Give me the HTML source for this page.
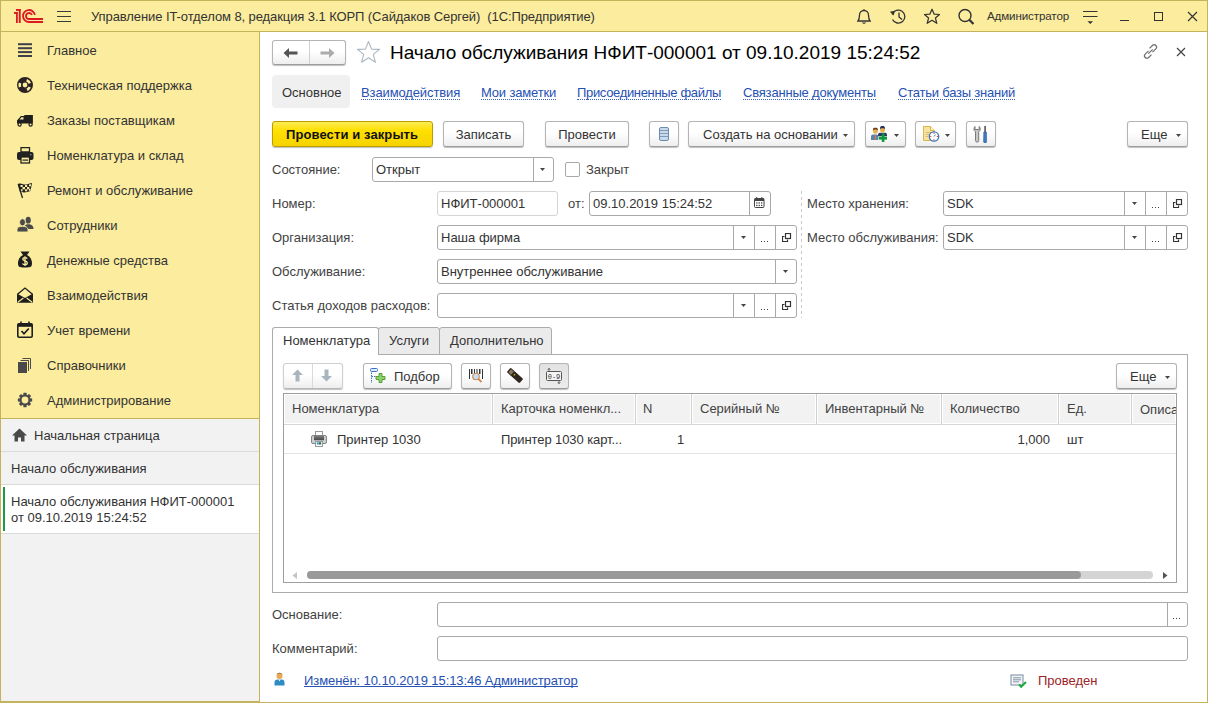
<!DOCTYPE html>
<html><head><meta charset="utf-8">
<style>
*{box-sizing:border-box;margin:0;padding:0}
html,body{width:1208px;height:703px;overflow:hidden;background:#fff;font-family:"Liberation Sans",sans-serif;font-size:13px;color:#333}
div,span,svg{position:absolute}
.t{white-space:nowrap;line-height:16px}
.bd{background:#C4B25C}
.si{left:47px;color:#333;white-space:nowrap;line-height:16px}
.lbl{color:#424242;white-space:nowrap;line-height:16px}
.inp{border:1px solid #A9A9A9;border-radius:3px;background:#fff;height:25px}
.inp .v{left:3px;top:4px;color:#333;white-space:nowrap;line-height:16px}
.dv{top:0;width:1px;height:23px;background:#A9A9A9}
.btn{border:1px solid #B4B4B4;border-bottom-color:#9C9C9C;border-radius:3px;background:linear-gradient(#FFFFFF 45%,#EEEEEE);box-shadow:0 1px 1px rgba(0,0,0,.25);height:26px}
.btn .v{top:5px;width:100%;left:0;text-align:center;color:#333;white-space:nowrap;line-height:16px}
.lnk{color:#2550B4;white-space:nowrap;line-height:16px;height:15px;border-bottom:1px dotted #3A62BE}
</style></head><body>
<!-- frame -->
<div style="left:0;top:0;width:1208px;height:31px;background:#FBEC9E"></div>
<div class="bd" style="left:0;top:0;width:1208px;height:1px"></div>
<div class="bd" style="left:0;top:31px;width:1208px;height:1px"></div>
<div style="left:1px;top:32px;width:258px;height:387px;background:#FBEC9E"></div>
<div class="bd" style="left:1px;top:418px;width:258px;height:1px"></div>
<div style="left:1px;top:419px;width:258px;height:283px;background:#F2F2F2"></div>
<div class="bd" style="left:259px;top:31px;width:1px;height:672px"></div>
<div class="bd" style="left:0;top:0;width:1px;height:703px"></div>
<div class="bd" style="left:1207px;top:0;width:1px;height:703px"></div>
<div class="bd" style="left:0;top:702px;width:1208px;height:1px"></div>
<div class="bd" style="left:0;top:701px;width:259px;height:1px"></div>

<!-- title bar -->
<svg style="left:10px;top:5px" width="36" height="20" viewBox="0 0 36 20"><g fill="#DA1A22"><rect x="4" y="7" width="3.6" height="1.9"/><rect x="6" y="7" width="1.8" height="11"/><rect x="6" y="4" width="4.7" height="1.9"/><rect x="8.8" y="4" width="1.9" height="14"/></g><g fill="none" stroke="#DA1A22" stroke-width="1.8"><path d="M24.9 9.96A6 6 0 1 0 19 17H33"/><path d="M21.85 10.07A3 3 0 1 0 19 14H33"/></g></svg>
<svg style="left:57px;top:10px" width="15" height="13" viewBox="0 0 15 13"><g stroke="#3A3A3A" stroke-width="1.2"><path d="M0 1.5H14M0 6.5H14M0 11.5H14"/></g></svg>
<div class="t" style="left:91px;top:9px;color:#333;letter-spacing:-0.09px">Управление IT-отделом 8, редакция 3.1 КОРП (Сайдаков Сергей)&nbsp; (1С:Предприятие)</div>

<svg style="left:855px;top:8px" width="18" height="17" viewBox="0 0 18 17"><g fill="none" stroke="#333" stroke-width="1.3"><path d="M3 13 C4.5 11 4.5 9 4.5 7 A4.5 4.5 0 0 1 13.5 7 C13.5 9 13.5 11 15 13 Z"/><path d="M9 1.2V2.5"/></g><path d="M6.5 14.6H11.5L9 16Z" fill="#333"/></svg>
<svg style="left:889px;top:8px" width="19" height="17" viewBox="0 0 19 17"><g fill="none" stroke="#333" stroke-width="1.3"><path d="M3.2 6.5 A6.5 6.5 0 1 1 3.5 11.5"/><path d="M10 4.5V9L13 11.5"/></g><path d="M0.8 3.8L4.6 7.6L6 2.8Z" fill="#333"/></svg>
<svg style="left:923px;top:8px" width="18" height="17" viewBox="0 0 18 17"><path d="M9 1.2L11.2 6.2L16.5 6.5L12.4 9.9L13.8 15.3L9 12.3L4.2 15.3L5.6 9.9L1.5 6.5L6.8 6.2Z" fill="none" stroke="#333" stroke-width="1.25" stroke-linejoin="round"/></svg>
<svg style="left:957px;top:8px" width="19" height="17" viewBox="0 0 19 17"><g fill="none" stroke="#333"><circle cx="8" cy="7.5" r="6" stroke-width="1.4"/><path d="M12.3 11.8L16.5 16" stroke-width="2.2"/></g></svg>
<div class="t" style="left:987px;top:8px;font-size:11.6px;letter-spacing:-0.12px;color:#333">Администратор</div>
<svg style="left:1082px;top:9px" width="17" height="16" viewBox="0 0 17 16"><g stroke="#333" stroke-width="1.2"><path d="M1 2.5H15.5M1 7.5H15.5"/></g><path d="M5.5 12.2H11L8.25 15Z" fill="#333"/></svg>
<div style="left:1120px;top:20px;width:9px;height:1.3px;background:#333"></div>
<div style="left:1154px;top:12px;width:9px;height:9px;border:1.3px solid #333"></div>
<svg style="left:1187px;top:11px" width="11" height="11" viewBox="0 0 11 11"><path d="M1 1L10 10M10 1L1 10" stroke="#333" stroke-width="1.2"/></svg>

<!-- sidebar -->
<svg style="left:17px;top:42px" width="16" height="16" viewBox="0 0 16 16"><g fill="#3D404B"><rect x="1" y="1.2" width="14" height="2"/><rect x="1" y="5.2" width="14" height="2"/><rect x="1" y="9.1" width="14" height="2"/><rect x="1" y="13" width="14" height="2"/></g></svg>
<svg style="left:17px;top:77px" width="16" height="16" viewBox="0 0 16 16"><circle cx="8" cy="8" r="5.2" fill="none" stroke="#2A2224" stroke-width="5.6"/><g stroke="#FBEC9E" stroke-width="2.6" fill="none"><path d="M9.6 3.2A5 5 0 0 1 12.8 6.4"/><path d="M12.7 10A5 5 0 0 1 10 12.7"/><path d="M3.1 10A5 5 0 0 1 3.1 6"/></g></svg>
<svg style="left:17px;top:113px" width="16" height="14" viewBox="0 0 16 14"><path d="M0 10.5V7.6L3.9 3.1H7.3V2.1H15.9V10.5Z" fill="#1E1E1E"/><path d="M2.6 6.6L4.4 4.2H6.5V6.6Z" fill="#FBEC9E"/><circle cx="2.6" cy="11.5" r="1.6" fill="#FBEC9E" stroke="#1E1E1E" stroke-width="1.2"/><circle cx="13.6" cy="11.5" r="1.6" fill="#FBEC9E" stroke="#1E1E1E" stroke-width="1.2"/></svg>
<svg style="left:17px;top:147px" width="17" height="17" viewBox="0 0 17 17"><path d="M4 0.5H12.5V5H4Z" fill="none" stroke="#222" stroke-width="1.3"/><rect x="0" y="5" width="16.5" height="8" rx="2" fill="#222"/><rect x="4" y="10" width="8.5" height="6" fill="#FBEC9E" stroke="#222" stroke-width="1.3"/><rect x="5.5" y="12.5" width="5.5" height="1.2" fill="#222"/><rect x="13" y="7" width="1.5" height="1.3" fill="#888"/></svg>
<svg style="left:17px;top:182px" width="16" height="17" viewBox="0 0 16 17"><path d="M1 2C4 0.5 6 3 9 2.5C11 2.2 13 1 15 1L13.5 9C11 9.5 9.5 10.5 7 10.5C5 10.5 4 9.5 3 10Z" fill="#222"/><g fill="#FBEC9E"><rect x="3.5" y="3" width="2.2" height="2"/><rect x="8" y="3" width="2.2" height="2"/><rect x="12" y="2.3" width="2" height="2"/><rect x="5.5" y="5" width="2.5" height="2.3"/><rect x="10" y="5" width="2.3" height="2.3"/><rect x="3.6" y="7.3" width="2" height="2"/><rect x="8" y="7.3" width="2.2" height="2"/><rect x="12" y="6.8" width="1.5" height="2"/></g><path d="M1.2 2L5.5 16" stroke="#222" stroke-width="1.3"/></svg>
<svg style="left:17px;top:216px" width="17" height="17" viewBox="0 0 17 17"><g fill="#4A4A4A"><ellipse cx="11.2" cy="4.2" rx="2.6" ry="3.4"/><path d="M8 9.5C9 8 13.5 8 14.5 9C16 10 16.5 11 16.5 13H11Z"/></g><g fill="#4A4A4A" stroke="#FBEC9E" stroke-width="0.9"><ellipse cx="5.5" cy="6.3" rx="3" ry="3.6"/><path d="M0 16V13.5C0 11.5 2 10.3 5.5 10.3C9 10.3 11 11.5 11 13.5V16Z"/></g></svg>
<svg style="left:17px;top:251px" width="16" height="17" viewBox="0 0 16 17"><path d="M3.5 0.5H12.5L10 4C15 6.5 16 12.5 14.2 15.6C12.5 16.9 3.5 16.9 1.8 15.6C0 12.5 1 6.5 6 4Z" fill="#1E1E1E"/><path d="M10.3 7.6C9.8 6.9 9 6.6 8 6.6C6.6 6.6 5.8 7.3 5.8 8.3C5.8 10.3 10.3 9.6 10.3 11.9C10.3 13 9.3 13.7 8 13.7C6.9 13.7 6 13.3 5.5 12.5M8 5.3V15" fill="none" stroke="#FBEC9E" stroke-width="1.3"/></svg>
<svg style="left:17px;top:286px" width="16" height="17" viewBox="0 0 16 17"><rect x="0" y="7.8" width="16" height="8.9" rx="0.6" fill="#1E1E1E"/><path d="M0.9 8.1L8 2.7L15.1 8.1L8 11.9Z" fill="#FBEC9E"/><path d="M0.5 8.2L8 2.1L15.5 8.2" fill="none" stroke="#1E1E1E" stroke-width="1.3"/><path d="M0.8 16.2L6.4 12M15.2 16.2L9.6 12" stroke="#FBEC9E" stroke-width="1.1"/></svg>
<svg style="left:17px;top:321px" width="16" height="17" viewBox="0 0 16 17"><rect x="0.8" y="2.8" width="14.4" height="13.4" rx="1.2" fill="none" stroke="#1E1E1E" stroke-width="1.6"/><rect x="0.8" y="2.8" width="14.4" height="3" fill="#1E1E1E"/><path d="M4 0.5V3.5M12 0.5V3.5" stroke="#1E1E1E" stroke-width="1.6"/><path d="M4.5 10L7 12.8L11.8 7.5" fill="none" stroke="#1E1E1E" stroke-width="1.7"/></svg>
<svg style="left:18px;top:357px" width="14" height="16" viewBox="0 0 14 16"><g fill="none" stroke="#4A4A4A" stroke-width="1"><path d="M4.5 1.5H12.5V12"/><path d="M2.5 3.5H10.5V14"/></g><rect x="0" y="5" width="9" height="11" fill="#4A4A4A"/></svg>
<svg style="left:17px;top:392px" width="16" height="16" viewBox="0 0 16 16"><path d="M6.55 0.85 L9.45 0.85 L9.87 3.04 L10.19 3.17 L12.03 1.92 L14.08 3.97 L12.83 5.81 L12.96 6.13 L15.15 6.55 L15.15 9.45 L12.96 9.87 L12.83 10.19 L14.08 12.03 L12.03 14.08 L10.19 12.83 L9.87 12.96 L9.45 15.15 L6.55 15.15 L6.13 12.96 L5.81 12.83 L3.97 14.08 L1.92 12.03 L3.17 10.19 L3.04 9.87 L0.85 9.45 L0.85 6.55 L3.04 6.13 L3.17 5.81 L1.92 3.97 L3.97 1.92 L5.81 3.17 L6.13 3.04Z" fill="#4A4A4A"/><circle cx="8" cy="8" r="3.4" fill="#FBEC9E"/></svg>
<div class="si" style="top:43px">Главное</div>
<div class="si" style="top:78px">Техническая поддержка</div>
<div class="si" style="top:113px">Заказы поставщикам</div>
<div class="si" style="top:148px">Номенклатура и склад</div>
<div class="si" style="top:183px">Ремонт и обслуживание</div>
<div class="si" style="top:218px">Сотрудники</div>
<div class="si" style="top:253px">Денежные средства</div>
<div class="si" style="top:288px">Взаимодействия</div>
<div class="si" style="top:323px">Учет времени</div>
<div class="si" style="top:358px">Справочники</div>
<div class="si" style="top:393px">Администрирование</div>

<svg style="left:12px;top:428px" width="16" height="14" viewBox="0 0 16 14"><path d="M7.5 0.5L0 7.5H2.5V13.5H6V9.5H9V13.5H12.5V7.5H15Z" fill="#4A4A4A"/></svg>
<div class="t" style="left:34px;top:428px">Начальная страница</div>
<div style="left:1px;top:451px;width:258px;height:1px;background:#DADADA"></div>
<div class="t" style="left:11px;top:461px">Начало обслуживания</div>
<div style="left:1px;top:484px;width:258px;height:50px;background:#fff;border-top:1px solid #DADADA;border-bottom:1px solid #DADADA"></div>
<div style="left:3px;top:487px;width:2px;height:44px;background:#1E9B47"></div>
<div class="t" style="left:11px;top:494px">Начало обслуживания НФИТ-000001<br>от 09.10.2019 15:24:52</div>

<!-- MAIN -->
<!-- header -->
<div class="btn" style="left:272px;top:40px;width:74px;height:25px"></div>
<div style="left:309px;top:41px;width:1px;height:23px;background:#D0D0D0"></div>
<svg style="left:283px;top:47px" width="16" height="12" viewBox="0 0 16 12"><path d="M0.5 6L6 1V4.5H14.5V7.5H6V11Z" fill="#555"/></svg>
<svg style="left:319px;top:47px" width="16" height="12" viewBox="0 0 16 12"><path d="M15.5 6L10 1V4.5H1.5V7.5H10V11Z" fill="#ABABAB"/></svg>
<svg style="left:356px;top:40px" width="25" height="24" viewBox="0 0 25 24"><path d="M12.5 1.5L15.6 9.1L23.5 9.4L17.3 14.4L19.4 22.2L12.5 17.7L5.6 22.2L7.7 14.4L1.5 9.4L9.4 9.1Z" fill="none" stroke="#ADB6BF" stroke-width="1.1" stroke-linejoin="round"/></svg>
<div class="t" style="left:390px;top:42px;font-size:19px;line-height:22px;color:#000">Начало обслуживания НФИТ-000001 от 09.10.2019 15:24:52</div>
<svg style="left:1142px;top:43px" width="17" height="17" viewBox="0 0 17 17"><g fill="none" stroke="#6E6E6E" stroke-width="1.2"><path d="M6.5 7.8L3.2 11.1A2.4 2.4 0 0 0 6.6 14.5L9.5 11.6"/><path d="M10.5 9.2L13.8 5.9A2.4 2.4 0 0 0 10.4 2.5L7.5 5.4"/><path d="M6.3 10.7L10.7 6.3"/></g></svg>
<svg style="left:1176px;top:47px" width="10" height="10" viewBox="0 0 10 10"><path d="M1 1L9 9M9 1L1 9" stroke="#444" stroke-width="1.2"/></svg>

<!-- tabs links -->
<div style="left:272px;top:75px;width:78px;height:33px;background:#F0F0F0;border-radius:4px"></div>
<div class="t" style="left:282px;top:85px;color:#333">Основное</div>
<div class="lnk" style="left:361px;top:85px;letter-spacing:-0.12px">Взаимодействия</div>
<div class="lnk" style="left:481px;top:85px;letter-spacing:-0.17px">Мои заметки</div>
<div class="lnk" style="left:577px;top:85px;letter-spacing:-0.33px">Присоединенные файлы</div>
<div class="lnk" style="left:743px;top:85px;letter-spacing:-0.19px">Связанные документы</div>
<div class="lnk" style="left:898px;top:85px;letter-spacing:-0.22px">Статьи базы знаний</div>

<!-- toolbar -->
<div style="left:272px;top:121px;width:161px;height:26px;border:1px solid #B89E00;border-radius:3px;background:linear-gradient(#FFEC55,#FFE000 35%,#F6D300);box-shadow:0 1px 1px rgba(0,0,0,.25)"></div>
<div class="t" style="left:286px;top:127px;font-weight:bold;color:#111;letter-spacing:0.1px">Провести и закрыть</div>
<div class="btn" style="left:443px;top:121px;width:81px"><div class="v">Записать</div></div>
<div class="btn" style="left:545px;top:121px;width:84px"><div class="v">Провести</div></div>
<div class="btn" style="left:649px;top:121px;width:30px"></div>
<svg style="left:659px;top:127px" width="10" height="14" viewBox="0 0 10 14"><rect x="0.5" y="0.5" width="9" height="13" rx="1.5" fill="#C9DAEA" stroke="#6A8BAA"/><g stroke="#7E9CB9" stroke-width="1"><path d="M1 3.5H9M1 6.5H9M1 9.5H9"/></g></svg>
<div class="btn" style="left:688px;top:121px;width:167px"><div class="v" style="left:14px;width:auto;text-align:left">Создать на основании</div></div>
<div class="btn" style="left:865px;top:121px;width:41px"></div>
<svg style="left:868px;top:123px" width="24" height="22" viewBox="0 0 24 22">
 <path d="M10 13.5V11.7A2 2 0 0 1 12 9.7H17A2 2 0 0 1 19 11.7V13.5Z" fill="#2B3766"/>
 <ellipse cx="14.5" cy="6.6" rx="2.5" ry="3" fill="#E6B450"/><path d="M12 6.2C11.8 3.5 13 3 14.5 3C16 3 17.2 3.5 17 6.2C16.5 4.8 12.5 4.8 12 6.2Z" fill="#2A2F5A"/>
 <path d="M3 17V13.6A2 2 0 0 1 5 11.6H8.4A2 2 0 0 1 10.4 13.6V17Z" fill="#5D84A6"/><path d="M7 11.8H7.9L8.1 16.8H6.8Z" fill="#E07A55"/>
 <ellipse cx="7.4" cy="7.8" rx="2.5" ry="2.9" fill="#E6B450"/><path d="M4.9 7.5C4.7 5 5.8 4.7 7.4 4.7C9 4.7 10.1 5 9.9 7.5C9.4 6.2 5.4 6.2 4.9 7.5Z" fill="#6A3A12"/>
 <rect x="10.3" y="13.3" width="9.2" height="3.8" fill="#fff" opacity="0.7"/>
 <rect x="13.8" y="10.3" width="2.6" height="8.7" fill="#0E9A3A"/><rect x="10.8" y="13.8" width="8.2" height="2.8" fill="#0E9A3A"/>
</svg>
<div class="btn" style="left:915px;top:121px;width:41px"></div>
<svg style="left:922px;top:126px" width="18" height="16" viewBox="0 0 18 16">
 <path d="M1.5 0.5H8.5L12.5 4.5V14.5H1.5Z" fill="#F6E4A0" stroke="#D9B54A"/><path d="M8.5 0.5V4.5H12.5" fill="#FFF6CC" stroke="#D9B54A"/>
 <g stroke="#D0B060" stroke-width="0.8"><path d="M3.5 6.5H9M3.5 8.5H7M3.5 10.5H6"/></g>
 <circle cx="12" cy="10.5" r="4.7" fill="#fff" stroke="#3F73B8" stroke-width="1.3"/>
 <g fill="#E02020"><rect x="11.5" y="6.8" width="1" height="1"/><rect x="11.5" y="13.3" width="1" height="1"/><rect x="8.3" y="10" width="1" height="1"/><rect x="14.8" y="10" width="1" height="1"/></g>
 <path d="M12 10.5L13.5 8.5" stroke="#3F73B8" stroke-width="0.9"/>
</svg>
<div class="btn" style="left:966px;top:121px;width:30px"></div>
<svg style="left:973px;top:125px" width="16" height="18" viewBox="0 0 16 18">
 <path d="M2 1.5C0.5 3 0.5 5.5 2.5 6.8V15.5A1.6 1.6 0 0 0 5.7 15.5V6.8C7.7 5.5 7.7 3 6.2 1.5V4.5H2Z" fill="#C9C9C9" stroke="#6E6E6E" stroke-width="0.9"/>
 <rect x="11.3" y="1" width="1.6" height="6" fill="#555"/>
 <path d="M10.8 7H13.4L13.6 16.5A1.5 1.5 0 0 1 10.6 16.5Z" fill="#3D7CC4" stroke="#2A5A96" stroke-width="0.6"/>
</svg>
<div class="btn" style="left:1127px;top:121px;width:61px"><div class="v" style="left:13px;width:auto;text-align:left">Еще</div></div>

<!-- fields -->
<div class="lbl" style="left:272px;top:162px">Состояние:</div>
<div class="inp" style="left:372px;top:157px;width:182px"><div class="v">Открыт</div><div class="dv" style="left:160px"></div></div>
<div style="left:565px;top:162px;width:15px;height:15px;border:1px solid #A9A9A9;border-radius:2px;background:#fff"></div>
<div class="lbl" style="left:586px;top:162px">Закрыт</div>

<div class="lbl" style="left:272px;top:196px">Номер:</div>
<div class="inp" style="left:437px;top:191px;width:121px;border-color:#D4D4D4"><div class="v">НФИТ-000001</div></div>
<div class="lbl" style="left:568px;top:196px">от:</div>
<div class="inp" style="left:589px;top:191px;width:182px"><div class="v">09.10.2019 15:24:52</div><div class="dv" style="left:159px"></div></div>
<svg style="left:754px;top:197px" width="11" height="11" viewBox="0 0 11 11"><rect x="0.5" y="1.5" width="9.5" height="9" rx="1" fill="#fff" stroke="#444"/><rect x="0.5" y="1.5" width="9.5" height="2.5" fill="#444"/><g fill="#444"><rect x="2.2" y="5.3" width="1.3" height="1.3"/><rect x="4.6" y="5.3" width="1.3" height="1.3"/><rect x="7" y="5.3" width="1.3" height="1.3"/><rect x="2.2" y="7.8" width="1.3" height="1.3"/><rect x="4.6" y="7.8" width="1.3" height="1.3"/><rect x="7" y="7.8" width="1.3" height="1.3"/></g><path d="M2.7 0V2M7.8 0V2" stroke="#444"/></svg>

<div class="lbl" style="left:272px;top:230px">Организация:</div>
<div class="inp" style="left:437px;top:225px;width:360px"><div class="v">Наша фирма</div><div class="dv" style="left:295px"></div><div class="dv" style="left:316px"></div><div class="dv" style="left:337px"></div></div>

<div class="lbl" style="left:272px;top:264px">Обслуживание:</div>
<div class="inp" style="left:437px;top:259px;width:360px"><div class="v">Внутреннее обслуживание</div><div class="dv" style="left:337px"></div></div>

<div class="lbl" style="left:272px;top:298px">Статья доходов расходов:</div>
<div class="inp" style="left:437px;top:293px;width:360px"><div class="dv" style="left:295px"></div><div class="dv" style="left:316px"></div><div class="dv" style="left:337px"></div></div>

<div style="left:801px;top:191px;width:1px;height:127px;background:repeating-linear-gradient(#C8C8C8 0 3px,transparent 3px 6px)"></div>

<div class="lbl" style="left:807px;top:196px">Место хранения:</div>
<div class="inp" style="left:943px;top:191px;width:245px"><div class="v">SDK</div><div class="dv" style="left:180px"></div><div class="dv" style="left:201px"></div><div class="dv" style="left:222px"></div></div>
<div class="lbl" style="left:807px;top:230px">Место обслуживания:</div>
<div class="inp" style="left:943px;top:225px;width:245px"><div class="v">SDK</div><div class="dv" style="left:180px"></div><div class="dv" style="left:201px"></div><div class="dv" style="left:222px"></div></div>


<!-- tabs -->
<div style="left:272px;top:354px;width:916px;height:239px;border:1px solid #ABABAB"></div>
<div style="left:378px;top:327px;width:62px;height:28px;background:#EBEBEB;border:1px solid #ABABAB;border-radius:3px 3px 0 0"></div>
<div style="left:439px;top:327px;width:113px;height:28px;background:#EBEBEB;border:1px solid #ABABAB;border-radius:3px 3px 0 0"></div>
<div style="left:272px;top:327px;width:107px;height:28px;background:#fff;border:1px solid #ABABAB;border-bottom:none;border-radius:3px 3px 0 0"></div>
<div class="t" style="left:283px;top:333px;color:#333">Номенклатура</div>
<div class="t" style="left:389px;top:333px;color:#333">Услуги</div>
<div class="t" style="left:450px;top:333px;color:#333">Дополнительно</div>

<!-- inner toolbar -->
<div class="btn" style="left:283px;top:363px;width:60px;border-color:#CFCFCF;border-bottom-color:#B8B8B8"></div>
<div style="left:312px;top:364px;width:1px;height:24px;background:#DADADA"></div>
<svg style="left:291px;top:369px" width="13" height="13" viewBox="0 0 13 13"><path d="M6.5 0.5L12 6H8.5V12.5H4.5V6H1Z" fill="#A9B5BD"/></svg>
<svg style="left:320px;top:369px" width="13" height="13" viewBox="0 0 13 13"><path d="M6.5 12.5L12 7H8.5V0.5H4.5V7H1Z" fill="#A9B5BD"/></svg>
<div class="btn" style="left:363px;top:363px;width:89px"><div class="v" style="left:30px;width:auto;text-align:left">Подбор</div></div>
<svg style="left:369px;top:367px" width="18" height="18" viewBox="0 0 18 18"><rect x="1.5" y="1.5" width="7" height="3" rx="1" fill="#DCE8F5" stroke="#3F73C8"/><path d="M2.5 5.5V16M2.5 9.5H7" stroke="#3F73C8" stroke-width="1.1" stroke-dasharray="1.5 1"/><path d="M10 6.5H13V9.5H16V12.5H13V15.5H10V12.5H7V9.5H10Z" fill="#8ED06A" stroke="#4E9A2E" stroke-width="0.9"/></svg>
<div class="btn" style="left:461px;top:363px;width:30px"></div>
<svg style="left:469px;top:369px" width="15" height="15" viewBox="0 0 15 15"><g fill="#333"><rect x="0" y="0" width="1" height="10"/><rect x="2" y="0" width="1.5" height="5"/><rect x="5" y="0" width="1" height="4"/><rect x="7.5" y="0" width="1" height="4"/><rect x="10" y="0" width="1.5" height="5"/><rect x="13" y="0" width="1" height="10"/></g><circle cx="7" cy="7.5" r="3.3" fill="#C9DDF2" stroke="#C98A52" stroke-width="1.1"/><path d="M9.3 9.8L12.5 13" stroke="#C98A52" stroke-width="1.8"/></svg>
<div class="btn" style="left:500px;top:363px;width:30px"></div>
<svg style="left:507px;top:368px" width="16" height="15" viewBox="0 0 16 15"><g transform="rotate(-48 8 7.5)"><rect x="5" y="-1" width="6" height="17" rx="1.2" fill="#2E2620"/><rect x="6" y="0.5" width="4" height="3.5" fill="#8A7A60"/><rect x="7.3" y="6" width="1.6" height="1.2" fill="#E2B400"/></g></svg>
<div class="btn" style="left:539px;top:363px;width:30px;background:linear-gradient(#E2E2E2,#ECECEC)"></div>
<svg style="left:545px;top:367px" width="18" height="18" viewBox="0 0 18 18"><rect x="1.5" y="4.5" width="15" height="9" rx="1" fill="#F4F4F4" stroke="#555"/><text x="9" y="11.8" font-family="Liberation Mono" font-size="7" text-anchor="middle" fill="#333">0-9</text><path d="M4 4.5V1.5M2.8 2.7L4 1.3L5.2 2.7M14 13.5V16.5M12.8 15.3L14 16.7L15.2 15.3" fill="none" stroke="#555" stroke-width="0.9"/></svg>
<div class="btn" style="left:1116px;top:363px;width:61px"><div class="v" style="left:13px;width:auto;text-align:left">Еще</div></div>

<!-- table -->
<div style="left:283px;top:393px;width:894px;height:190px;border:1px solid #9F9F9F;background:#fff"></div>
<div style="left:285px;top:395px;width:890px;height:28px;background:#F2F2F2"></div>
<div style="left:284px;top:424px;width:892px;height:1px;background:#D6D6D6"></div>
<div style="left:284px;top:453px;width:892px;height:1px;background:#E3E3E3"></div>
<div style="left:491px;top:395px;width:3px;height:28px;background:#fff"></div><div style="left:492px;top:394px;width:1px;height:30px;background:#D0D0D0"></div>
<div style="left:634px;top:395px;width:3px;height:28px;background:#fff"></div><div style="left:635px;top:394px;width:1px;height:30px;background:#D0D0D0"></div>
<div style="left:690px;top:395px;width:3px;height:28px;background:#fff"></div><div style="left:691px;top:394px;width:1px;height:30px;background:#D0D0D0"></div>
<div style="left:815px;top:395px;width:3px;height:28px;background:#fff"></div><div style="left:816px;top:394px;width:1px;height:30px;background:#D0D0D0"></div>
<div style="left:940px;top:395px;width:3px;height:28px;background:#fff"></div><div style="left:941px;top:394px;width:1px;height:30px;background:#D0D0D0"></div>
<div style="left:1057px;top:395px;width:3px;height:28px;background:#fff"></div><div style="left:1058px;top:394px;width:1px;height:30px;background:#D0D0D0"></div>
<div style="left:1130px;top:395px;width:3px;height:28px;background:#fff"></div><div style="left:1131px;top:394px;width:1px;height:30px;background:#D0D0D0"></div>
<div class="lbl" style="left:292px;top:401px">Номенклатура</div>
<div class="lbl" style="left:501px;top:401px">Карточка номенкл...</div>
<div class="lbl" style="left:643px;top:401px">N</div>
<div class="lbl" style="left:700px;top:401px">Серийный №</div>
<div class="lbl" style="left:825px;top:401px">Инвентарный №</div>
<div class="lbl" style="left:950px;top:401px">Количество</div>
<div class="lbl" style="left:1067px;top:401px">Ед.</div>
<div style="left:1132px;top:395px;width:44px;height:29px;overflow:hidden"><div class="lbl" style="left:8px;top:7px">Описание</div></div>
<svg style="left:311px;top:431px" width="16" height="16" viewBox="0 0 16 16"><defs><linearGradient id="pg" x1="0" y1="0" x2="0" y2="1"><stop offset="0" stop-color="#7C7C7C"/><stop offset="1" stop-color="#454545"/></linearGradient></defs><rect x="4.5" y="0.5" width="7" height="5" fill="#fff" stroke="#999"/><rect x="0.5" y="4.5" width="15" height="8" rx="1.5" fill="#C9CDD3" stroke="#858585"/><rect x="3" y="5" width="10" height="4.5" fill="url(#pg)"/><rect x="1" y="9.5" width="14" height="1" fill="#D5DCE5"/><rect x="4.5" y="10.5" width="7" height="5" fill="#fff" stroke="#999"/><rect x="5.8" y="11.3" width="1.8" height="2.2" fill="#2A90E0"/><rect x="7.8" y="11.3" width="2.4" height="2.2" fill="#1F6B3A"/><rect x="14" y="8.5" width="1" height="1" fill="#7CE07C"/></svg>
<div class="t" style="left:337px;top:432px;color:#333">Принтер 1030</div>
<div class="t" style="left:501px;top:432px;color:#333;letter-spacing:-0.1px">Принтер 1030 карт...</div>
<div class="t" style="left:677px;top:432px;color:#333">1</div>
<div class="t" style="left:1017px;top:432px;width:33px;text-align:right;color:#333">1,000</div>
<div class="t" style="left:1067px;top:432px;color:#333">шт</div>
<!-- scrollbar -->
<svg style="left:292px;top:572px" width="6" height="7" viewBox="0 0 6 7"><path d="M5 0V7L0.5 3.5Z" fill="#C4C4C4"/></svg>
<div style="left:307px;top:571px;width:846px;height:8px;border-radius:4px;background:#D4D4D4"></div>
<div style="left:307px;top:571px;width:774px;height:8px;border-radius:4px;background:#999"></div>
<svg style="left:1162px;top:572px" width="6" height="7" viewBox="0 0 6 7"><path d="M1 0V7L5.5 3.5Z" fill="#555"/></svg>

<!-- bottom -->
<div class="lbl" style="left:272px;top:607px">Основание:</div>
<div class="inp" style="left:437px;top:602px;width:751px"><div class="dv" style="left:729px"></div></div>
<div class="lbl" style="left:272px;top:641px">Комментарий:</div>
<div class="inp" style="left:437px;top:636px;width:751px"></div>
<svg style="left:274px;top:672px" width="11" height="14" viewBox="0 0 11 14"><path d="M0.5 13.5V10.5A3 3 0 0 1 3.5 7.5H7.5A3 3 0 0 1 10.5 10.5V13.5Z" fill="#2F8BC4"/><path d="M4.5 7.5L5.5 9.5L6.5 7.5Z" fill="#fff"/><circle cx="5.5" cy="4" r="3" fill="#E9A94E"/><path d="M2.4 4.3A3.1 3.1 0 0 1 8.6 4.3L8.4 2.8A3 2.6 0 0 0 2.6 2.8Z" fill="#3B2A1A"/></svg>
<div class="t" style="left:304px;top:673px;letter-spacing:-0.08px;color:#2550B4;border-bottom:1px solid #2A55B6;line-height:16px;height:14px">Изменён: 10.10.2019 15:13:46 Администратор</div>
<svg style="left:1010px;top:674px" width="17" height="14" viewBox="0 0 17 14"><rect x="1" y="1" width="12" height="10" fill="#F4F4F4" stroke="#8294AD" stroke-width="1.1"/><g stroke="#8294AD" stroke-width="1"><path d="M3 3.8H11M3 5.8H11M3 7.8H9"/></g><path d="M9 10.5L11.2 12.8L16 8" fill="none" stroke="#1EAA3C" stroke-width="2"/></svg>
<div class="t" style="left:1038px;top:673px;color:#9A2428">Проведен</div>
<svg style="left:741px;top:236px" width="5" height="3" viewBox="0 0 5 3"><path d="M0 0H5L2.5 3Z" fill="#444"/></svg>
<svg style="left:761px;top:241px" width="7" height="1" viewBox="0 0 7 1"><g fill="#444"><rect x="0" y="0" width="1" height="1"/><rect x="3" y="0" width="1" height="1"/><rect x="6" y="0" width="1" height="1"/></g></svg>
<svg style="left:782px;top:233px" width="10" height="10" viewBox="0 0 10 10"><g fill="none" stroke="#333" stroke-width="1.2"><rect x="3.5" y="0.5" width="5" height="5"/><path d="M2.5 3.5H0.5V8.5H5.5V6.5"/></g></svg>
<svg style="left:741px;top:304px" width="5" height="3" viewBox="0 0 5 3"><path d="M0 0H5L2.5 3Z" fill="#444"/></svg>
<svg style="left:761px;top:309px" width="7" height="1" viewBox="0 0 7 1"><g fill="#444"><rect x="0" y="0" width="1" height="1"/><rect x="3" y="0" width="1" height="1"/><rect x="6" y="0" width="1" height="1"/></g></svg>
<svg style="left:782px;top:301px" width="10" height="10" viewBox="0 0 10 10"><g fill="none" stroke="#333" stroke-width="1.2"><rect x="3.5" y="0.5" width="5" height="5"/><path d="M2.5 3.5H0.5V8.5H5.5V6.5"/></g></svg>
<svg style="left:1132px;top:202px" width="5" height="3" viewBox="0 0 5 3"><path d="M0 0H5L2.5 3Z" fill="#444"/></svg>
<svg style="left:1152px;top:207px" width="7" height="1" viewBox="0 0 7 1"><g fill="#444"><rect x="0" y="0" width="1" height="1"/><rect x="3" y="0" width="1" height="1"/><rect x="6" y="0" width="1" height="1"/></g></svg>
<svg style="left:1173px;top:199px" width="10" height="10" viewBox="0 0 10 10"><g fill="none" stroke="#333" stroke-width="1.2"><rect x="3.5" y="0.5" width="5" height="5"/><path d="M2.5 3.5H0.5V8.5H5.5V6.5"/></g></svg>
<svg style="left:1132px;top:236px" width="5" height="3" viewBox="0 0 5 3"><path d="M0 0H5L2.5 3Z" fill="#444"/></svg>
<svg style="left:1152px;top:241px" width="7" height="1" viewBox="0 0 7 1"><g fill="#444"><rect x="0" y="0" width="1" height="1"/><rect x="3" y="0" width="1" height="1"/><rect x="6" y="0" width="1" height="1"/></g></svg>
<svg style="left:1173px;top:233px" width="10" height="10" viewBox="0 0 10 10"><g fill="none" stroke="#333" stroke-width="1.2"><rect x="3.5" y="0.5" width="5" height="5"/><path d="M2.5 3.5H0.5V8.5H5.5V6.5"/></g></svg>
<svg style="left:783px;top:270px" width="5" height="3" viewBox="0 0 5 3"><path d="M0 0H5L2.5 3Z" fill="#444"/></svg>
<svg style="left:540px;top:168px" width="5" height="3" viewBox="0 0 5 3"><path d="M0 0H5L2.5 3Z" fill="#444"/></svg>
<svg style="left:1173px;top:618px" width="7" height="1" viewBox="0 0 7 1"><g fill="#444"><rect x="0" y="0" width="1" height="1"/><rect x="3" y="0" width="1" height="1"/><rect x="6" y="0" width="1" height="1"/></g></svg>
<svg style="left:843px;top:134px" width="5" height="3" viewBox="0 0 5 3"><path d="M0 0H5L2.5 3Z" fill="#444"/></svg>
<svg style="left:894px;top:134px" width="5" height="3" viewBox="0 0 5 3"><path d="M0 0H5L2.5 3Z" fill="#444"/></svg>
<svg style="left:945px;top:134px" width="5" height="3" viewBox="0 0 5 3"><path d="M0 0H5L2.5 3Z" fill="#444"/></svg>
<svg style="left:1176px;top:134px" width="5" height="3" viewBox="0 0 5 3"><path d="M0 0H5L2.5 3Z" fill="#444"/></svg>
<svg style="left:1165px;top:376px" width="5" height="3" viewBox="0 0 5 3"><path d="M0 0H5L2.5 3Z" fill="#444"/></svg>
</body></html>
